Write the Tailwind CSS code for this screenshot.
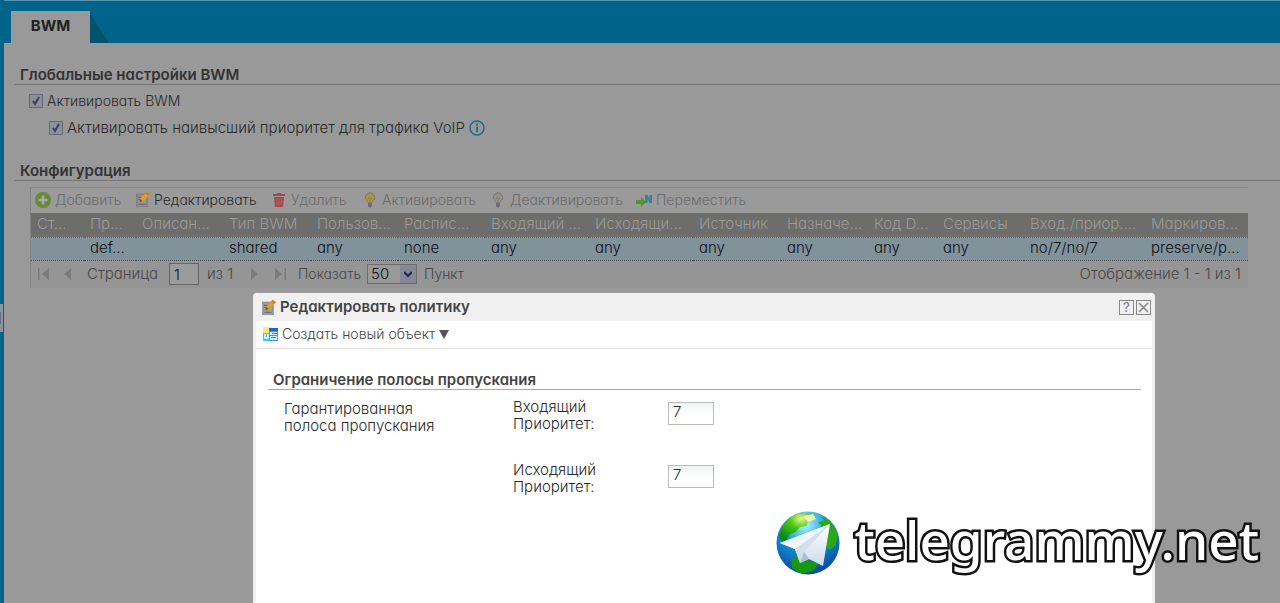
<!DOCTYPE html>
<html lang="ru">
<head>
<meta charset="utf-8">
<title>BWM</title>
<script src="https://cdn.jsdelivr.net/npm/@tailwindcss/browser@4"></script>
</head>
<body class="relative min-h-screen overflow-hidden bg-[#999] font-['Inter','Noto_Sans',sans-serif] text-[15px] leading-4 font-light text-[#2a2a2a] [font-feature-settings:'cv11']">
<svg class="hidden">
  <symbol id="edit" viewBox="0 0 14 14"><path d="M1 1.500h11V14H1z" fill="#777" fill-opacity=".75"/><path d="M2.500 3h8v10h-8z" fill="#aaa" fill-opacity=".55"/><path d="M3 5h3M3 7h2M3 11.500h7" stroke="#666"/><path d="M4 9.500l1-3.500 6-6 3 2-6.500 6.500z" fill="#e5a01b"/><path d="M11 0l3 2-1.500 1.500-3-2z" fill="#d2762b"/><path d="M4 9.500l1-3 2 2z" fill="#704d22"/></symbol>
  <symbol id="bulb" viewBox="0 0 12 16"><path d="M6 .7a4.700 4.700 0 0 0-3 8.300c.8.700 1 1.300 1 2h4c0-.7.2-1.300 1-2A4.700 4.700 0 0 0 6 .7z" fill="currentColor" stroke="#77736a" stroke-width=".8"/><path d="M4 11h4v3L7 15.500H5L4 14z" fill="#6c6c6c"/><path d="M4 6l2 1 2-1M6 7v4" fill="none" stroke="#7c795f" stroke-width=".7"/></symbol>
  <symbol id="tick" viewBox="0 0 14 14"><path d="M4 7l2 3 4-7" fill="none" stroke="#3c4070" stroke-width="2"/></symbol>
</svg>

<div class="min-h-screen border-l-4 border-[#00648a]">
  <header class="flex h-[43px] items-end border-t border-t-[#5796ae] bg-[#00648a] pl-[7px]">
    <button class="h-8 w-[79px] bg-[#999] pb-[2px] text-[15px] font-bold text-[#222]">BWM</button>
    <svg class="h-8 w-5" viewBox="0 0 20 32"><path d="M0 2L19 32H0z" fill="#02536f"/></svg>
  </header>

  <main class="pl-[10px]">
    <h2 class="mt-[24px] border-b border-[#777] pb-px pl-[6px] font-semibold text-[#333]">Глобальные настройки BWM</h2>
    <label class="mt-2 ml-[15px] flex h-4 w-max items-center gap-1 text-[14px]">
      <span class="relative size-[14px]"><input type="checkbox" checked class="block size-[14px] appearance-none border border-[#666977] bg-[#8f8f95]"><svg class="pointer-events-none absolute inset-0 size-[14px]"><use href="#tick"/></svg></span>Активировать BWM
    </label>
    <div class="mt-[11px] ml-[35px] flex h-4 items-center gap-1">
      <label class="flex items-center gap-1"><span class="relative size-[14px]"><input type="checkbox" checked class="block size-[14px] appearance-none border border-[#666977] bg-[#8f8f95]"><svg class="pointer-events-none absolute inset-0 size-[14px]"><use href="#tick"/></svg></span>Активировать наивысший приоритет для трафика VoIP</label>
      <svg class="size-4" viewBox="0 0 16 16" fill="none" stroke="#1a6f8e" stroke-width="1.500"><circle cx="8" cy="8" r="7"/><path d="M8 7v5" stroke-width="2"/><path d="M8 3.500v2" stroke-width="2"/></svg>
    </div>

    <h2 class="mt-[27px] border-b border-[#777] pb-px pl-[6px] font-semibold text-[#333]">Конфигурация</h2>

    <section class="mt-[6px] mr-8 ml-4 border-t border-l border-t-[#898989] border-l-[#848484]">
      <div class="flex h-[25px] items-center bg-[#9a9a9a] pb-[2px] text-[14px] text-[#6c6c6c]">
        <button class="flex w-[100px] items-center gap-1 pl-1"><svg class="size-4" viewBox="0 0 16 16"><circle cx="8" cy="8" r="8" fill="#658b35"/><path d="M8 3.500v9M3.500 8h9" stroke="#aaa" stroke-width="2.500"/></svg>Добавить</button>
        <button class="flex w-[137px] items-center gap-1 pl-1 text-[#2a2a2a]"><svg class="size-[15px]"><use href="#edit"/></svg>Редактировать</button>
        <button class="flex w-[93px] items-center gap-[6px] pl-[5px]"><svg class="h-[14px] w-3" viewBox="0 0 12 14" fill="#a44a4a"><path d="M4 0h4v1h4v2H0V1h4z"/><path d="M1 4h10l-1 10H2z"/><path d="M4 5v7M6 5v7M8 5v7" stroke="#b56a6a" stroke-width=".7"/></svg>Удалить</button>
        <button class="flex w-[128px] items-center gap-[6px] pl-[3px]"><svg class="h-4 w-3 text-[#aa9640]"><use href="#bulb"/></svg>Активировать</button>
        <button class="flex w-[145px] items-center gap-[6px] pl-[3px]"><svg class="h-4 w-3 text-[#929292]"><use href="#bulb"/></svg>Деактивировать</button>
        <button class="flex items-center gap-[3px] pl-[2px]"><svg class="h-4 w-[17px]" viewBox="0 0 17 16"><path d="M0 8h5V5l5 5-5 5v-3H0z" fill="#55932e"/><path d="M9 3h2.500l2 4V3H16v8h-2.500l-2-4v4H9z" fill="#3c7f98"/></svg>Переместить</button>
      </div>
      <table class="w-full table-fixed text-left whitespace-nowrap [&_td]:overflow-hidden [&_td]:pb-[2px] [&_td]:pl-[6px] [&_th]:overflow-hidden [&_th]:pb-[2px] [&_th]:pl-[6px] [&_th]:font-light">
        <colgroup><col class="w-[53px]"><col class="w-[52px]"><col class="w-[87px]"><col class="w-[88px]"><col class="w-[87px]"><col class="w-[87px]"><col class="w-[104px]"><col class="w-[104px]"><col class="w-[88px]"><col class="w-[87px]"><col class="w-[69px]"><col class="w-[87px]"><col class="w-[121px]"><col></colgroup>
        <thead><tr class="h-6 bg-[#6d6d6b] text-[#9a9a9a]"><th>Ст…</th><th>Пр…</th><th>Описан…</th><th>Тип BWM</th><th>Пользов…</th><th>Распис…</th><th>Входящий …</th><th>Исходящи…</th><th>Источник</th><th>Назначе…</th><th>Код D…</th><th>Сервисы</th><th>Вход./приор.…</th><th>Маркиров…</th></tr></thead>
        <tbody><tr class="h-[23px] border-t border-b border-dotted border-t-[#5c6a72] border-b-[#414e56] bg-[#82929b] text-[#0b1115]"><td></td><td>def…</td><td></td><td>shared</td><td>any</td><td>none</td><td>any</td><td>any</td><td>any</td><td>any</td><td>any</td><td>any</td><td>no/7/no/7</td><td>preserve/p…</td></tr></tbody>
      </table>
      <div class="flex h-[27px] items-center bg-[#959595] text-[#484848]">
        <div class="flex w-14 items-center gap-[14px] pl-[7px]">
          <button aria-label="Первая"><svg class="block h-3 w-3" viewBox="0 0 12 12" fill="#7c7c7c"><path d="M0 0h1.500v12H0zM11 0v12L4 6z"/></svg></button>
          <button aria-label="Назад"><svg class="block h-3 w-2" viewBox="0 0 8 12" fill="#7c7c7c"><path d="M7 0v12L0 6z"/></svg></button>
        </div>
        <label for="page" class="w-[82px]">Страница</label>
        <input id="page" value="1" class="h-[22px] w-[30px] border border-[#666] bg-[#9b9b9b] px-1 text-[#111]">
        <span class="w-[46px] pl-2">из 1</span>
        <div class="flex w-[53px] items-center gap-4 pl-[5px]">
          <button aria-label="Вперёд"><svg class="block h-3 w-2" viewBox="0 0 8 12" fill="#7c7c7c"><path d="M1 0v12l7-6z"/></svg></button>
          <button aria-label="Последняя"><svg class="block h-3 w-3" viewBox="0 0 12 12" fill="#7c7c7c"><path d="M10.500 0H12v12h-1.500zM1 0v12l7-6z"/></svg></button>
        </div>
        <label for="count" class="w-[69px] text-[14px]">Показать</label>
        <div class="relative h-5 w-[50px]"><select id="count" class="h-5 w-full appearance-none border border-[#6c6c6c] bg-[#999] pl-[3px] leading-4 text-[#111]"><option>50</option></select><span class="pointer-events-none absolute top-px right-px flex h-[18px] w-4 items-center justify-center bg-[#868995]"><svg class="h-2 w-2" viewBox="0 0 8 8"><path d="M0 2l4 4 4-4" fill="none" stroke="#222a50" stroke-width="2.200"/></svg></span></div>
        <span class="pl-[7px] text-[14px]">Пункт</span>
        <span class="ml-auto pr-[7px]">Отображение 1 - 1 из 1</span>
      </div>
    </section>
  </main>
</div>

<div class="absolute top-[304px] left-0 flex h-7 w-[3px] items-center bg-[#8b9499]"><i class="h-3 w-px bg-[#65717a]"></i></div>

<div role="dialog" aria-labelledby="title" class="absolute top-[293px] right-[125px] bottom-0 left-[253px] rounded-t border-x-[3px] border-[#f0f0f0] bg-white">
  <div class="flex h-7 items-center rounded-t bg-[#f0f0f0] pl-[5px]">
    <svg class="size-[15px]"><use href="#edit"/></svg>
    <h1 id="title" class="ml-1 font-semibold text-[#444]">Редактировать политику</h1>
    <div class="mr-px ml-auto flex gap-[2px] text-[#888]">
      <button aria-label="Помощь" class="flex size-[15px] items-center justify-center border border-[#888] text-[13px] font-medium">?</button>
      <button aria-label="Закрыть" class="flex size-[15px] items-center justify-center border border-[#888]"><svg class="size-[11px]" viewBox="0 0 11 11" stroke="currentColor" stroke-width="1.600"><path d="M1 1l9 9M10 1l-9 9"/></svg></button>
    </div>
  </div>
  <div class="flex h-7 items-center border-b border-[#ddd] pb-px pl-[7px]">
    <button class="flex items-center text-[#444]"><svg class="mr-1 h-[14px] w-[15px]" viewBox="0 0 15 14"><path d="M0 0h8v7H0z" fill="#ffe77a"/><path d="M0 6h7v8H0z" fill="#3cc8f5"/><path d="M6 1h9v13H6z" fill="#3d9ee8"/><path d="M6 1h9v3H6z" fill="#1565d8"/><path d="M7 5h7v3H7zM7 9h7v4H7z" fill="#d3edff"/><path d="M9 6.500h5M8 10.500h5" stroke="#247ee0"/><path d="M2 7v4h3V7" stroke="#fff" fill="none" stroke-width="1.500"/></svg><span class="text-[14px]">Создать новый объект</span><svg class="ml-1 h-[9px] w-[10px]" viewBox="0 0 10 9"><path d="M0 0h10L5 9z" fill="#555"/></svg></button>
  </div>
  <form class="pt-[22px] pr-[11px] pl-3 leading-[17px]">
    <h2 class="border-b border-[#aaa] pb-px pl-[5px] font-semibold text-[#444]">Ограничение полосы пропускания</h2>
    <div class="flex pt-2 pl-4">
      <p class="w-[229px] pt-[2px]">Гарантированная<br>полоса пропускания</p>
      <div class="flex flex-col gap-[29px]">
        <div class="flex"><label for="in" class="w-[155px]">Входящий<br>Приоритет:</label><input id="in" value="7" class="mt-1 h-[23px] w-[46px] border border-[#bbb] bg-linear-to-b from-[#f1f4f4] to-white to-60% px-1 pb-1"></div>
        <div class="flex"><label for="out" class="w-[155px]">Исходящий<br>Приоритет:</label><input id="out" value="7" class="mt-1 h-[23px] w-[46px] border border-[#bbb] bg-linear-to-b from-[#f1f4f4] to-white to-60% px-1 pb-1"></div>
      </div>
    </div>
  </form>
</div>

<a href="#" class="absolute right-[21px] bottom-[27px] flex items-center">
  <svg class="mr-[14px] size-16" viewBox="0 0 64 64">
    <defs><radialGradient id="sea" cx=".45" cy=".2" r=".85"><stop offset="0" stop-color="#b3f7fa"/><stop offset=".4" stop-color="#169ee0"/><stop offset="1" stop-color="#073b96"/></radialGradient><radialGradient id="land" cx=".6" cy=".2" r=".8"><stop offset="0" stop-color="#e8f790"/><stop offset=".4" stop-color="#48c810"/><stop offset="1" stop-color="#078615"/></radialGradient><linearGradient id="wing" x1="0" y1="0" x2="0" y2="1"><stop offset="0" stop-color="#fff"/><stop offset="1" stop-color="#cbdcec"/></linearGradient></defs>
    <circle cx="32" cy="32" r="31.500" fill="url(#sea)"/>
    <path d="M3 25C5 14 12 6 21 3l14-1 5 5-7 3-3 5-6 1-4 5-6 2-5 8-4-1z" fill="url(#land)"/>
    <path d="M47 5c8 5 13 12 15 21l-3 9-6 4-5-7 1-13-7-8 6-1z" fill="#2aaa12"/>
    <path d="M15 48l8-3 8 4 12 3-6 8-11 3-10-6z" fill="#15990f"/>
    <path d="M27 5l10-2 3 5-8 3z" fill="#f4f5b4"/>
    <path d="M4 32L54 13 47 55 33 48 24 52 19 38z" fill="url(#wing)"/>
    <path d="M4 32L54 13 19 38z" fill="#f2f7fb"/><path d="M54 13L19 38l5 14 4-11z" fill="#d2e0ec"/><path d="M28 41l-4 11 9-4z" fill="#a9c0d6"/>
  </svg>
  <span class="pb-[6px] font-['Noto_Sans',sans-serif] text-[53px] leading-[60px] font-medium text-white [-webkit-text-stroke:5px_#111] [paint-order:stroke_fill] [stroke-linejoin:round]">telegrammy.net</span>
</a>
</body>
</html>
